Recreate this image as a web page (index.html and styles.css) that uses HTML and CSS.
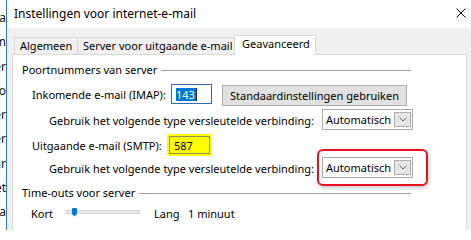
FILE: index.html
```html
<!DOCTYPE html>
<html lang="nl">
<head>
<meta charset="utf-8">
<title>Instellingen voor internet-e-mail</title>
<link rel="stylesheet" href="styles.css">
</head>
<body>
<div class="screen">
  <div class="bg-strip">
    <div class="bg-lines">
      <div>na</div><div>om</div><div>er</div><div>go</div><div>er</div><div>er</div><div>aar</div><div>bet</div><div>ba</div>
    </div>
  </div>
  <div class="dialog">
    <div class="titlebar">
      <span class="title">Instellingen voor internet-e-mail</span>
      <svg class="close" width="10" height="10" viewBox="0 0 10 10"><path d="M0.5 0.5 L9.5 9.5 M9.5 0.5 L0.5 9.5" stroke="#111" stroke-width="1" fill="none"/></svg>
    </div>
    <div class="client">
      <div class="tabs">
        <div class="tab tab-general">Algemeen</div>
        <div class="tab tab-server">Server voor uitgaande e-mail</div>
        <div class="tab tab-active">Geavanceerd</div>
      </div>
      <div class="panel">
        <div class="group-head">
          <span class="group-label">Poortnummers van server</span>
          <span class="rule"></span>
        </div>
        <div class="row row-imap">
          <span class="lbl lbl-imap">Inkomende e-mail (IMAP):</span>
          <span class="field field-focus"><span class="selection">143</span></span>
          <span class="btn">Standaardinstellingen gebruiken</span>
        </div>
        <div class="row row-enc">
          <span class="lbl lbl-enc">Gebruik het volgende type versleutelde verbinding:</span>
          <span class="combo"><span class="combo-text">Automatisch</span><span class="drop"><svg width="8" height="5" viewBox="0 0 8 5"><path d="M0.5 0.5 L4 4 L7.5 0.5" stroke="#666" stroke-width="1" fill="none"/></svg></span></span>
        </div>
        <div class="row row-smtp">
          <span class="lbl lbl-smtp">Uitgaande e-mail (SMTP):</span>
          <span class="field field-marked">587</span>
        </div>
        <div class="row row-enc2">
          <span class="lbl lbl-enc">Gebruik het volgende type versleutelde verbinding:</span>
          <span class="combo combo-marked"><span class="combo-text">Automatisch</span><span class="drop"><svg width="8" height="5" viewBox="0 0 8 5"><path d="M0.5 0.5 L4 4 L7.5 0.5" stroke="#666" stroke-width="1" fill="none"/></svg></span></span>
        </div>
        <div class="group-head group-timeouts">
          <span class="group-label">Time-outs voor server</span>
          <span class="rule"></span>
        </div>
        <div class="row row-timeout">
          <span class="lbl-kort">Kort</span>
          <svg class="slider" width="74" height="20" viewBox="0 0 74 20">
            <rect x="0.5" y="7.5" width="73" height="3" fill="#e7e7e7" stroke="#d6d6d6"/>
            <path d="M6 6 Q6 5 7 5 H10 Q11 5 11 6 V11 L8.5 13.5 L6 11 Z" fill="#0078d7"/>
          </svg>
          <span class="lbl-lang">Lang</span>
          <span class="lbl-value">1 minuut</span>
        </div>
      </div>
    </div>
  </div>
</div>
</body>
</html>
```
FILE: styles.css
```css
* { box-sizing: border-box; }
html, body { margin: 0; padding: 0; }
body {
  width: 471px;
  height: 230px;
  overflow: hidden;
  background: #ffffff;
  font-family: "Noto Sans", "Open Sans", sans-serif;
  font-size: 11px;
  color: #000;
}
.screen {
  display: flex;
  width: 471px;
  height: 230px;
}
.bg-strip {
  width: 6px;
  overflow: hidden;
  background: #fff;
  flex: none;
}
.bg-lines {
  width: 40px;
  margin-left: -34px;
  text-align: right;
  padding-top: 6px;
  font-size: 12px;
  line-height: 24.3px;
  color: #111;
  white-space: nowrap;
}
.dialog {
  flex: 1;
  display: flex;
  flex-direction: column;
  border-left: 1px solid #2b7cd3;
  min-width: 0;
}
.titlebar {
  height: 28px;
  flex: none;
  background: #fff;
  display: flex;
  align-items: center;
  justify-content: space-between;
  padding: 0 5px 2px 7px;
}
.title {
  font-size: 12px;
  color: #000;
}
.close { display: block; }
.client {
  flex: 1;
  background: #f0f0f0;
  padding: 7px 4px 0 5px;
  display: flex;
  flex-direction: column;
}
.tabs {
  display: flex;
  align-items: flex-end;
  height: 19px;
  padding-left: 2px;
  position: relative;
  z-index: 1;
}
.tab {
  height: 17px;
  line-height: 15px;
  border: 1px solid #d9d9d9;
  border-bottom: none;
  background: #f0f0f0;
  padding-left: 5px;
  white-space: nowrap;
}
.tab-general { width: 64px; }
.tab-server { width: 158px; margin-left: -1px; }
.tab-active {
  width: 82px;
  height: 20px;
  line-height: 16px;
  margin-left: -1px;
  margin-bottom: -1px;
  background: #fff;
  padding-left: 7px;
}
.panel {
  flex: 1;
  background: #fff;
  border: 1px solid #d9d9d9;
  border-bottom: none;
  display: flex;
  flex-direction: column;
}
.group-head {
  display: flex;
  align-items: center;
  height: 14px;
  margin-top: 8px;
  padding-left: 9px;
  padding-right: 55px;
  line-height: 14px;
}
.group-label { white-space: nowrap; }
.rule {
  flex: 1;
  height: 1px;
  background: #a0a0a0;
  margin-left: 4px;
  margin-top: 1px;
}
.row {
  display: flex;
  align-items: center;
  white-space: nowrap;
}
.lbl { flex: none; }
.row-imap { height: 22px; margin-top: 7px; padding-left: 19px; align-items: flex-start; }
.row-imap .lbl { line-height: 22px; }
.lbl-imap { width: 139px; }
.lbl-smtp { width: 137px; }
.row-enc { height: 21px; margin-top: 3px; padding-left: 36px; }
.row-smtp { height: 20px; margin-top: 5px; padding-left: 19px; }
.row-enc2 { height: 21px; margin-top: 2px; padding-left: 36px; }
.lbl-enc { width: 273px; padding-top: 1px; }
.field {
  width: 41px;
  height: 20px;
  border: 1px solid #7a7a7a;
  background: #fff;
  padding-left: 4px;
  line-height: 18px;
  flex: none;
}
.field-focus {
  border-color: #2f6fb0;
  padding-top: 3px;
  line-height: 13px;
}
.selection {
  display: inline-block;
  height: 13px;
  line-height: 13px;
  background: #0078d7;
  color: #fff;
  padding-right: 1px;
  border-right: 1px solid #222;
}
.field-marked {
  height: 18px;
  line-height: 17px;
  background: #ffff00;
  border-color: #8d8d5a;
  box-shadow: 0 0 0 2px #ffff00;
}
.btn {
  margin-left: 10px;
  margin-top: 1px;
  width: 185px;
  height: 21px;
  line-height: 19px;
  text-align: center;
  background: #e1e1e1;
  border: 1px solid #adadad;
  flex: none;
}
.combo {
  position: relative;
  width: 91px;
  height: 21px;
  border: 1px solid #a9a9a9;
  background: #fff;
  display: flex;
  align-items: center;
  justify-content: space-between;
  padding: 0 1px 0 3px;
  flex: none;
}
.combo-text { line-height: 19px; }
.drop {
  width: 17px;
  height: 15px;
  background: #e6e6e6;
  border: 1px solid #acacac;
  display: flex;
  align-items: center;
  justify-content: center;
}
.drop svg { display: block; }
.combo-marked::after {
  content: "";
  position: absolute;
  left: -6px;
  top: -9px;
  width: 107px;
  height: 33px;
  border: 2px solid #e81123;
  border-radius: 6px;
  box-shadow: 1px 2px 4px rgba(0, 0, 0, 0.22);
}
.group-timeouts { margin-top: 8px; }
.row-timeout { height: 20px; margin-top: 3px; padding-left: 18px; }
.lbl-kort { width: 35px; }
.slider { display: block; flex: none; }
.lbl-lang { width: 34px; margin-left: 14px; }
```
